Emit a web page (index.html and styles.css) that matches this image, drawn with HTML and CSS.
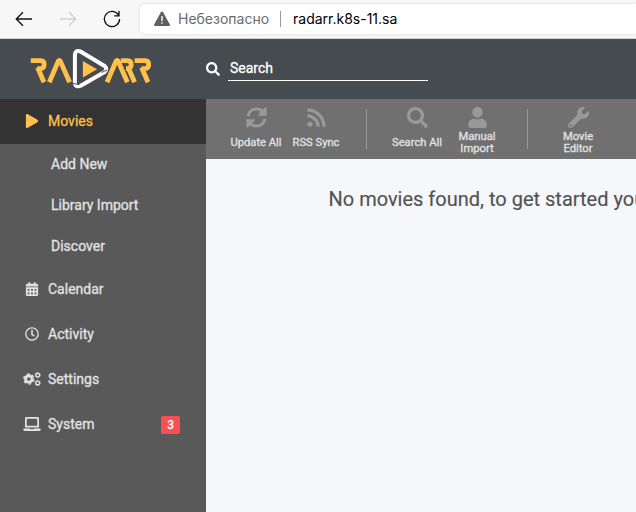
FILE: index.html
```html
<!DOCTYPE html>
<html lang="ru">
<head>
<meta charset="utf-8">
<title>Radarr</title>
<link rel="stylesheet" href="styles.css">
</head>
<body>
<div class="browser">
  <svg class="nav-icon" viewBox="0 0 18 18"><path d="M17 9H1.5M8 2.2L1.2 9L8 15.8"/></svg>
  <svg class="nav-icon disabled" viewBox="0 0 18 18"><path d="M1 9h15.5M10 2.2L16.8 9L10 15.8"/></svg>
  <svg class="nav-icon reload" viewBox="0 0 18 18"><path d="M15.6 5.2A7.6 7.6 0 1 0 16.6 9M16 1v4.8h-4.8"/></svg>
  <div class="address">
    <svg class="warning" viewBox="0 0 16 16"><path fill="#606060" d="M6.900 1.200q1.100-1.600 2.200 0l6.600 12.100q.7 1.700-1 1.700H1.300q-1.700 0-1-1.700z"/><path fill="#fff" d="M7.300 5h1.400v5H7.300zM7.300 11.300h1.400v1.500H7.300z"/></svg>
    <span class="insecure">Небезопасно</span>
    <span class="bar"></span>
    <span class="url">radarr.k8s-11.sa</span>
  </div>
</div>
<header class="header">
  <svg class="logo" viewBox="0 0 122 42">
    <g fill="none" stroke="#ffc04d" stroke-width="4.800">
      <path d="M.8 12.600h9.700q3.700 0 3.700 4t-3.700 4H7.200"/><path d="M7.600 19.500L14 34.200"/>
      <path d="M19.300 34.200L28.600 12.400h1.400l9.600 21.800" stroke-linejoin="bevel"/>
      <path d="M77 34.200l9.400-21.800h1.400l9.600 21.800" stroke-linejoin="bevel"/>
      <path d="M90.800 12.600h6.700q3.700 0 3.700 4t-3.700 4h-1.500M98.200 19.500l6.400 14.700"/>
      <path d="M104.600 12.600h10.400q3.700 0 3.700 4t-3.700 4h-3.500M111.600 19.500l6.400 14.700"/>
    </g>
    <path d="M46.600 38q-1.700-1-1.700-3.600V7.300Q45 1.500 50.500 3.500L74.600 18q3.200 3 0 6L52 37q-3.500 2-5.400 1z" fill="#464b50" stroke="#fff" stroke-width="4" stroke-linejoin="round"/>
    <path d="M43 35.500l6.500 1.200M71.600 24.500l5.400-2.600" stroke="#464b50" stroke-width="1"/>
    <path d="M52.900 13v16.400l14.200-8.200z" fill="#ffc04d"/>
  </svg>
  <svg class="search-icon" viewBox="0 0 512 512"><use href="#search"/></svg>
  <div class="search">Search</div>
</header>
<div class="app">
  <nav class="sidebar">
    <div class="item active"><svg viewBox="0 0 448 512"><path d="M424.400 214.700L72.400 6.600C43.800-10.300 0 6.100 0 47.900V464c0 37.500 40.700 60.100 72.400 41.300l352-208c31.400-18.500 31.500-64.100 0-82.600z"/></svg><span>Movies</span></div>
    <div class="sub">Add New</div>
    <div class="sub">Library Import</div>
    <div class="sub">Discover</div>
    <div class="item"><svg viewBox="0 0 448 512"><path fill-rule="evenodd" d="M400 64h-48V16c0-9-7-16-16-16h-32c-9 0-16 7-16 16v48H160V16c0-9-7-16-16-16h-32c-9 0-16 7-16 16v48H48C21 64 0 85 0 112v48h448v-48c0-27-21-48-48-48zM0 192v272c0 27 21 48 48 48h352c27 0 48-21 48-48V192zM64 256h64v64H64zM192 256h64v64h-64zM320 256h64v64h-64zM64 384h64v64H64zM192 384h64v64h-64zM320 384h64v64h-64z"/></svg><span>Calendar</span></div>
    <div class="item"><svg viewBox="0 0 512 512"><path d="M256 8C119 8 8 119 8 256s111 248 248 248 248-111 248-248S393 8 256 8zm0 448c-110.500 0-200-89.500-200-200S145.500 56 256 56s200 89.500 200 200-89.500 200-200 200zm61.800-104.400l-84.900-61.700c-3.100-2.300-4.900-5.900-4.900-9.700V116c0-6.600 5.400-12 12-12h32c6.600 0 12 5.400 12 12v141.700l66.800 48.600c5.400 3.900 6.500 11.400 2.600 16.800L334.600 349c-3.900 5.300-11.400 6.500-16.800 2.600z"/></svg><span>Activity</span></div>
    <div class="item"><svg viewBox="0 0 640 512"><g fill="none" stroke="currentColor"><circle cx="204" cy="256" r="120" stroke-width="105"/><circle cx="204" cy="256" r="185" stroke-width="50" stroke-dasharray="96.870"/><circle cx="528" cy="112" r="68" stroke-width="50"/><circle cx="528" cy="112" r="98" stroke-width="28" stroke-dasharray="51.310"/><circle cx="528" cy="400" r="68" stroke-width="50"/><circle cx="528" cy="400" r="98" stroke-width="28" stroke-dasharray="51.310"/></g></svg><span>Settings</span></div>
    <div class="item"><svg viewBox="0 0 640 512"><path d="M624 416H381.540c-.740 19.810-14.710 32-32.740 32H288c-18.690 0-33.020-17.470-32.770-32H16c-8.800 0-16 7.200-16 16v16c0 35.200 28.800 64 64 64h512c35.200 0 64-28.800 64-64v-16c0-8.800-7.200-16-16-16zM576 48c0-26.400-21.600-48-48-48H112C85.600 0 64 21.600 64 48v336h512V48zm-64 272H128V64h384v256z"/></svg><span>System</span><span class="badge">3</span></div>
  </nav>
  <main class="main">
    <div class="toolbar">
      <div class="tool"><svg viewBox="0 0 512 512"><path fill="none" stroke="currentColor" stroke-width="72" d="M49 224C67 120 151 46 256 46c65 0 119 28 158 72M463 288c-18 104-102 178-207 178-65 0-119-28-158-72"/><path d="M504 12v190c0 9-7 14-14 14H302v-44L462 12zM8 500V310c0-9 7-14 14-14h188v44L50 500z"/></svg><div class="label">Update All</div></div>
      <div class="tool"><svg viewBox="0 0 448 512"><path d="M128 416a64 64 0 1 1-128 0a64 64 0 0 1 128 0zm175.700 47.200c-8.300-154.600-132.100-278.600-286.900-286.900C7.700 175.800 0 183.100 0 192.300v48c0 8.400 6.500 15.500 14.900 16 111.800 7.300 201.500 96.700 208.800 208.800.5 8.400 7.600 14.900 16 14.900h48c9.200 0 16.500-7.700 16-16.800zm144.300.3C439.600 229.700 251.500 40.400 16.500 32 7.500 31.700 0 39 0 48v48.100c0 8.600 6.800 15.600 15.500 16 191.100 7.800 344.600 161.300 352.400 352.400.4 8.700 7.400 15.500 16 15.500H432c9 0 16.300-7.500 16-16.500z"/></svg><div class="label">RSS Sync</div></div>
      <div class="separator"></div>
      <div class="tool"><svg viewBox="0 0 512 512"><path id="search" d="M505 442.700L405.300 343c-4.500-4.500-10.600-7-17-7H372c27.600-35.300 44-79.700 44-128C416 93.100 322.900 0 208 0S0 93.100 0 208s93.100 208 208 208c48.300 0 92.700-16.400 128-44v16.300c0 6.400 2.500 12.500 7 17l99.700 99.700c9.400 9.400 24.600 9.400 33.900 0l28.300-28.300c9.400-9.400 9.400-24.600.1-34zM208 336c-70.700 0-128-57.200-128-128 0-70.700 57.200-128 128-128 70.700 0 128 57.200 128 128 0 70.700-57.200 128-128 128z"/></svg><div class="label">Search All</div></div>
      <div class="tool"><svg viewBox="0 0 448 512"><path d="M224 256c70.700 0 128-57.300 128-128S294.700 0 224 0 96 57.300 96 128s57.300 128 128 128zm89.600 32h-16.700c-22.200 10.200-46.900 16-72.900 16s-50.600-5.800-72.900-16h-16.700C60.200 288 0 348.200 0 422.400V464c0 26.500 21.500 48 48 48h352c26.500 0 48-21.500 48-48v-41.600c0-74.200-60.200-134.400-134.400-134.400z"/></svg><div class="label">Manual<br>Import</div></div>
      <div class="separator"></div>
      <div class="tool"><svg viewBox="0 0 512 512"><path d="M507.730 109.100c-2.240-9.030-13.540-12.090-20.120-5.510l-74.360 74.360-67.880-11.310-11.310-67.880 74.360-74.360c6.620-6.620 3.430-17.900-5.660-20.160-47.380-11.740-99.550.910-136.580 37.930-39.640 39.640-50.550 97.100-34.050 147.200L18.740 402.760c-24.990 24.990-24.990 65.510 0 90.500 24.990 24.990 65.510 24.990 90.500 0l213.210-213.210c50.120 16.710 107.470 5.680 147.370-34.220 37.070-37.070 49.700-89.320 37.910-136.730zM64 472c-13.250 0-24-10.750-24-24 0-13.260 10.750-24 24-24s24 10.740 24 24c0 13.250-10.750 24-24 24z"/></svg><div class="label">Movie<br>Editor</div></div>
    </div>
    <div class="message">No movies found, to get started you</div>
  </main>
</div>
</body>
</html>
```

FILE: styles.css
```css
* { box-sizing: border-box; }
body {
  margin: 0;
  width: 636px;
  height: 512px;
  overflow: hidden;
  font: 400 14px/20px Roboto, sans-serif;
  -webkit-text-stroke: 0.3px currentColor;
  color: #e1e2e3;
}
svg { display: block; fill: currentColor; flex: none; }
.browser {
  display: flex;
  align-items: center;
  height: 39px;
  padding: 0 0 1px 15px;
  background: #f7f7f7;
  border-bottom: 1px solid #d0d2d3;
  color: #101010;
}
.nav-icon { width: 18px; height: 18px; margin-right: 26px; fill: none; stroke: currentColor; stroke-width: 1.3; }
.nav-icon.disabled { color: #cfcfcf; }
.nav-icon.reload { margin-right: 19px; }
.address {
  display: flex;
  align-items: center;
  flex: 1;
  height: 30px;
  padding-left: 14px;
  background: #fff;
  border-radius: 5px 0 0 5px;
  box-shadow: 0 0 3px #0002;
  font: 400 14px/20px Inter, sans-serif;
  -webkit-text-stroke: 0;
  white-space: nowrap;
}
.warning { width: 16px; height: 16px; margin-right: 8px; }
.insecure { width: 102px; color: #6b6b6b; }
.bar { width: 1px; height: 16px; margin-right: 12px; background: #999; }
.url { color: #000; }
.header {
  display: flex;
  align-items: center;
  height: 60px;
  padding-left: 30px;
  background: #464b50;
  color: #fff;
}
.logo { width: 122px; height: 42px; }
.search-icon { width: 14px; height: 14px; margin-left: 54px; }
.search { width: 200px; height: 24px; margin-left: 8px; padding: 1px 0 0 2px; border-bottom: 1px solid #fff; }
.app { display: flex; height: 413px; }
.sidebar { width: 206px; background: #595959; }
.item { display: flex; align-items: center; height: 45px; padding: 0 26px 1px 23px; }
.item svg { width: 18px; height: 14px; margin-right: 7px; }
.item.active { background: #333; color: #ffc04d; }
.sub { height: 41px; padding: 10px 0 0 51px; }
.badge {
  width: 19px;
  height: 18px;
  margin: 1px 0 0 auto;
  border-radius: 2px;
  background: #f94e55;
  color: #fff;
  font-size: 12px;
  line-height: 18px;
  text-align: center;
}
.main { flex: 1; min-width: 0; background: #f5f7fa; }
.toolbar { display: flex; height: 60px; padding-left: 20px; background: #707070; }
.tool { flex: none; width: 60px; padding-top: 8px; }
.tool svg { width: 21px; height: 21px; margin: 0 auto 2px; color: #999; }
.label {
  display: flex;
  align-items: center;
  justify-content: center;
  height: 25px;
  font-size: 11.2px;
  line-height: 12px;
  text-align: center;
  white-space: nowrap;
}
.separator { flex: none; width: 1px; height: 40px; margin: 10px 20px; background: #999; }
.message { padding: 26px 0 0 122.5px; color: #515253; font: 400 20px/28px Roboto, sans-serif; -webkit-text-stroke: 0.15px currentColor; white-space: nowrap; overflow: hidden; }
```
